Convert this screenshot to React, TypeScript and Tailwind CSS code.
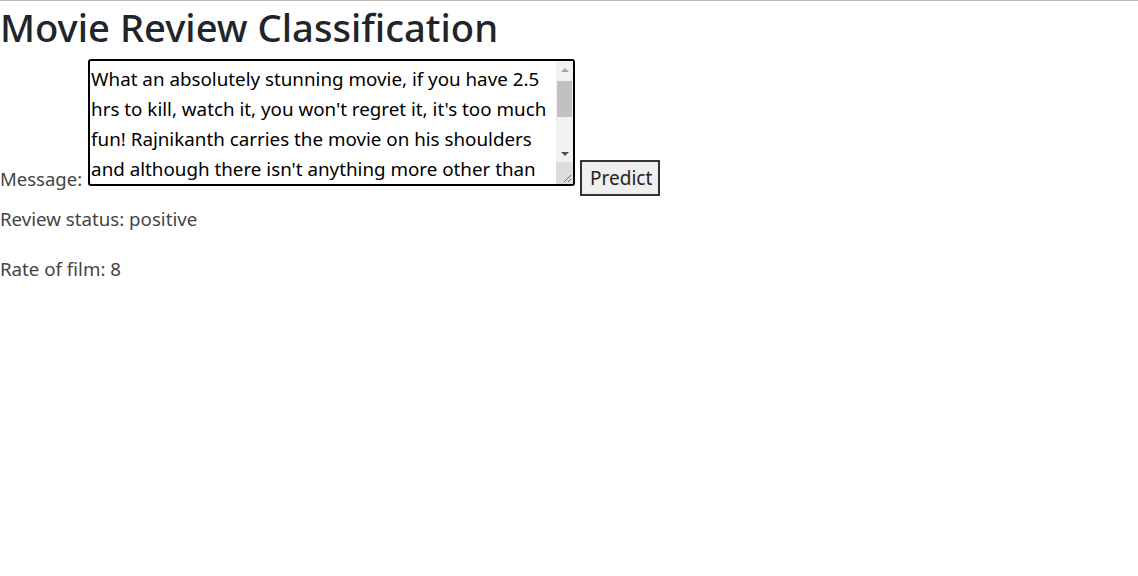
import React from "react";

const review =
  "What an absolutely stunning movie, if you have 2.5\nhrs to kill, watch it, you won't regret it, it's too much\nfun! Rajnikanth carries the movie on his shoulders\nand although there isn't anything more other than\nhim, the film is a total entertainer from start to\nfinish. The music, the action and the comedy all\nwork together and make it a treat for the fans.";

export default function App() {
  return (
    <div
      className="min-h-[576px] w-full border-t border-[#b9b9b9] bg-white text-[#444]"
      style={{ fontFamily: '"Noto Sans", "Open Sans", sans-serif' }}
    >
      <h1 className="m-0 mb-[6px] pt-[2px] text-[38.2px] font-medium leading-[48px] text-[#212529]">
        Movie Review Classification
      </h1>
      <div className="flex items-end">
        <label className="mb-[4px] text-[18.5px] leading-[26px]">Message:</label>
        <div className="relative ml-[6px] mr-[5px] mt-[2px] mb-[10px] h-[127px] w-[487px]">
          <textarea
            readOnly
            defaultValue={review}
            className="block h-full w-full resize-none overflow-hidden rounded-[3px] border-2 border-black py-[3px] pl-[1px] pr-[19px] text-[18.8px] leading-[30px] text-black outline-none"
          />
          <div className="absolute bottom-[2px] right-[2px] top-[2px] flex w-[17px] flex-col bg-[#f1f1f1]">
            <div className="flex h-[17px] items-center justify-center">
              <div className="h-0 w-0 border-x-[4px] border-b-[4px] border-x-transparent border-b-[#a3a3a3]" />
            </div>
            <div className="h-[67px] px-[1px] pt-[3px]">
              <div className="h-[36px] w-full bg-[#c1c1c1]" />
            </div>
            <div className="flex h-[17px] items-center justify-center">
              <div className="h-0 w-0 border-x-[4px] border-t-[4px] border-x-transparent border-t-[#505050]" />
            </div>
            <div className="relative flex-1 bg-[#dcdcdc]">
              <svg className="absolute bottom-[1px] right-[1px]" width="9" height="9" viewBox="0 0 9 9">
                <path d="M8 1 L1 8 M8 5 L5 8" stroke="#6b6b6b" strokeWidth="1" fill="none" />
              </svg>
            </div>
          </div>
        </div>
        <button className="h-[36px] w-[80px] border-2 border-[#333] bg-[#efefef] px-2 pt-[1px] text-[19px] text-[#222]">
          Predict
        </button>
      </div>
      <p className="mt-[10px] text-[18.7px] leading-[26px]">Review status: positive</p>
      <p className="mt-[24px] text-[18.7px] leading-[26px]">Rate of film: 8</p>
    </div>
  );
}
